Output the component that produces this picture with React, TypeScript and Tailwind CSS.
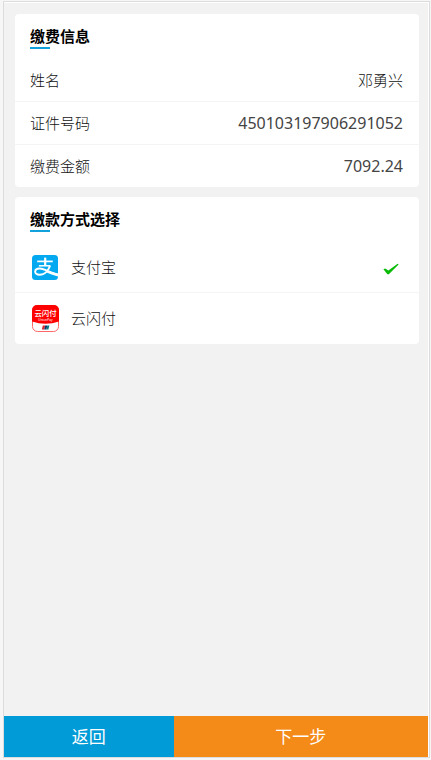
import React, { useState } from "react";

const details = [
  { label: "姓名", value: "邓勇兴" },
  { label: "证件号码", value: "450103197906291052", numeric: true },
  { label: "缴费金额", value: "7092.24", numeric: true },
];

const AlipayIcon = () => (
  <svg viewBox="0 0 26 26" className="size-[26px]" aria-hidden="true">
    <rect width="26" height="25" y="1" rx="3.5" fill="#02a9f1" />
    <g fill="none" stroke="#fff" strokeLinecap="butt">
      <path d="M5.2 7.4H20.8" strokeWidth="1.7" />
      <path d="M13.2 3.6V11.8" strokeWidth="2.2" />
      <path d="M6.8 11.8H18.4" strokeWidth="1.5" />
      <path
        d="M18 11.6C16.8 15.4 13.4 20.8 7.8 20.8C4.6 20.8 3 19.2 3.2 17.4C3.4 15.4 5.4 14.4 7.8 14.5C12.2 14.7 17.6 18.2 25.8 20.8"
        strokeWidth="1.9"
      />
    </g>
    <path d="M14.6 16.8L26 19.6V22.4C21.6 21.4 17.4 19.6 13.4 18Z" fill="#fff" />
  </svg>
);

const UnionPayIcon = () => (
  <svg viewBox="0 0 27 27" className="size-[27px]" aria-hidden="true">
    <rect x="0.5" y="0.5" width="26" height="26" rx="5" fill="#fff" stroke="#f66" />
    <path d="M0 16.4V5.5Q0 0 5.5 0H21.5Q27 0 27 5.5V16.4Q13.5 21 0 16.4Z" fill="#fe0000" />
    <text
      x="13.5"
      y="11.4"
      textAnchor="middle"
      fontSize="7.4"
      fontWeight="500"
      fill="#fff"
      className="font-['Noto_Sans_CJK_SC',sans-serif]"
    >
      云闪付
    </text>
    <text
      x="13.5"
      y="15.6"
      textAnchor="middle"
      fontSize="3.2"
      fill="#fff"
      className="font-['Noto_Sans',sans-serif]"
    >
      UnionPay
    </text>
    <path d="M10.8 20.4H13.2L12.2 24.6H9.8Z" fill="#d8282f" />
    <path d="M13.2 20.4H15.4L14.4 24.6H12.2Z" fill="#12366b" />
    <path d="M15.4 20.4H17.4L16.4 24.6H14.4Z" fill="#067a80" />
  </svg>
);

const CheckIcon = () => (
  <svg viewBox="0 0 16 16" className="size-4" aria-hidden="true">
    <path d="M0.4 10.2L2.2 9.4L5.4 11.6L14.6 4.8L15.6 5.4L5.8 15.2H4.4Z" fill="#09bb07" />
  </svg>
);

const methods = [
  { id: "alipay", name: "支付宝", icon: <AlipayIcon /> },
  { id: "unionpay", name: "云闪付", icon: <UnionPayIcon /> },
];

const Title = ({ children }: { children: React.ReactNode }) => (
  <div className="flex h-[45px] flex-col items-start px-[15px] pt-[11px]">
    <h2 className="text-[15px] leading-[22px] font-bold text-black">{children}</h2>
    <span className="h-0.5 w-5 bg-[#12a1da]" />
  </div>
);

const App = () => {
  const [method, setMethod] = useState("alipay");

  return (
    <div className="flex min-h-screen bg-[#f6f6f6] pt-px pr-px pb-[2px] pl-[3px] font-['Noto_Sans','Noto_Sans_CJK_SC',sans-serif] text-[#111]">
      <div className="flex flex-1 border border-[#dcdcdc]">
        <div className="flex flex-1 flex-col border-t border-r border-white bg-[#f2f2f2]">
          <main className="flex flex-1 flex-col gap-2.5 pt-[11px] pr-[9px] pl-[11px]">
            <section className="overflow-hidden rounded bg-white">
              <Title>缴费信息</Title>
              <dl className="divide-y divide-[#f4f4f4]">
                {details.map((item) => (
                  <div
                    key={item.label}
                    className="flex items-center justify-between py-2.5 pr-4 pl-[15px]"
                  >
                    <dt className="text-[15px] leading-[22px] font-light">{item.label}</dt>
                    <dd
                      className={
                        item.numeric
                          ? "text-[16px] leading-[22px] text-[#444]"
                          : "text-[15px] leading-[22px] font-light"
                      }
                    >
                      {item.value}
                    </dd>
                  </div>
                ))}
              </dl>
            </section>

            <section className="overflow-hidden rounded bg-white">
              <Title>缴款方式选择</Title>
              <div className="divide-y divide-[#f4f4f4]">
                {methods.map((item) => (
                  <label
                    key={item.id}
                    htmlFor={item.id}
                    className="flex h-[51px] cursor-pointer items-center pr-5 pl-[17px]"
                  >
                    <input
                      id={item.id}
                      type="radio"
                      name="method"
                      checked={method === item.id}
                      onChange={() => setMethod(item.id)}
                      className="sr-only"
                    />
                    <span className="flex w-[39px]">{item.icon}</span>
                    <span className="flex-1 text-[15px] font-light">{item.name}</span>
                    {method === item.id && <CheckIcon />}
                  </label>
                ))}
              </div>
            </section>
          </main>

          <footer className="flex h-[41px] text-[17px] text-white">
            <button type="button" className="w-2/5 bg-[#019bd7]">
              返回
            </button>
            <button type="button" className="w-3/5 bg-[#f48a18]">
              下一步
            </button>
          </footer>
        </div>
      </div>
    </div>
  );
};

export default App;
